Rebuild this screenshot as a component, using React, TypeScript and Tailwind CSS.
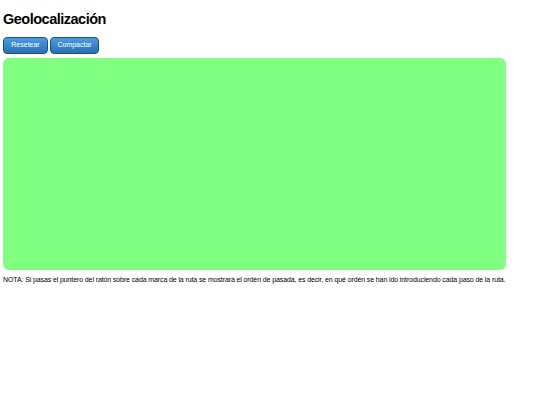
export default function App() {
  return (
    <div className="bg-white px-[3px] pt-[10px]" style={{ fontFamily: '"Liberation Sans", Arial, sans-serif' }}>
      <h1 className="text-[14.5px] font-bold leading-[18px] tracking-[-0.5px] text-black">Geolocalización</h1>
      <div className="mt-[9px] flex gap-[2px]">
        <button className="h-[17px] w-[45px] rounded-[4px] border border-[#1d4f80] bg-gradient-to-b from-[#4a9de0] to-[#2a6fb5] text-[7px] text-white">
          Resetear
        </button>
        <button className="h-[17px] w-[49px] rounded-[4px] border border-[#1d4f80] bg-gradient-to-b from-[#4a9de0] to-[#2a6fb5] text-[7px] text-white">
          Compactar
        </button>
      </div>
      <div className="mt-[4px] h-[212px] w-[503px] rounded-[6px] bg-[#80ff80]" />
      <p className="mt-[5px] text-[7px] leading-[10px] tracking-[-0.11px] text-black">
        NOTA: Si pasas el puntero del ratón sobre cada marca de la ruta se mostrará el ordén de pasada, es decir, en qué ordén se han ido introduciendo cada paso de la ruta.
      </p>
    </div>
  );
}
